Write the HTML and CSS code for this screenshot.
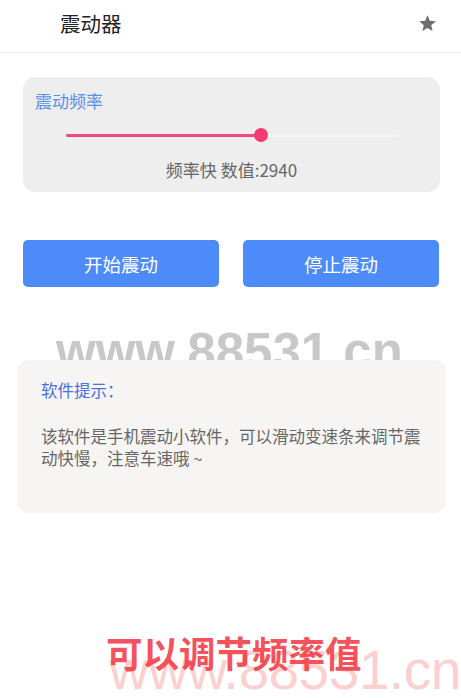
FILE: index.html
```html
<!DOCTYPE html>
<html lang="zh">
<head>
<meta charset="utf-8">
<title>震动器</title>
<link rel="stylesheet" href="styles.css">
</head>
<body>
<div class="page">
  <header class="topbar">
    <div class="title">震动器</div>
    <svg class="star" viewBox="0 0 24 24" width="19" height="19"><polygon points="12,1.5 14.9,8.6 22.5,9.2 16.7,14.1 18.5,21.6 12,17.6 5.5,21.6 7.3,14.1 1.5,9.2 9.1,8.6" fill="#6e6e6e"/></svg>
  </header>

  <section class="card freq">
    <div class="card-title">震动频率</div>
    <div class="slider">
      <div class="track">
        <div class="fill" style="width:59%"></div>
        <div class="thumb"></div>
      </div>
    </div>
    <div class="value">频率快 数值:2940</div>
  </section>

  <div class="buttons">
    <button class="btn">开始震动</button>
    <button class="btn">停止震动</button>
  </div>

  <div class="wm-gray">www.88531.cn</div>

  <section class="card tips">
    <div class="tips-title">软件提示：</div>
    <p class="tips-body">该软件是手机震动小软件，可以滑动变速条来调节震动快慢，注意车速哦 ~</p>
  </section>

  <div class="wm-pink">www.88531.cn</div>
  <div class="caption">可以调节频率值</div>
</div>
</body>
</html>
```

FILE: styles.css
```css
* { box-sizing: border-box; }
html, body { margin: 0; padding: 0; background: #ffffff; }
body {
  font-family: "Noto Sans CJK SC", "Noto Sans", sans-serif;
  width: 461px;
  height: 698px;
  overflow: hidden;
}
.page { position: relative; width: 461px; height: 698px; overflow: hidden; }

.topbar {
  height: 53px;
  border-bottom: 1px solid #ebebeb;
  display: flex;
  align-items: center;
  justify-content: space-between;
  padding: 0 24px 0 60px;
}
.title { font-size: 20.5px; color: #222; line-height: 1; margin-top: -5px; }
.star { margin-top: -5px; }

.card { border-radius: 12px; }

.freq {
  margin: 24px 21px 0 23px;
  height: 115px;
  background: #eeeeee;
  padding: 12px 12px 0 12px;
}
.card-title { font-size: 17px; line-height: 24px; color: #5a8fea; }
.slider { margin: 15px 31px 0 31px; height: 14px; display: flex; align-items: center; }
.track { position: relative; width: 100%; height: 3px; background: #f4f4f4; border-radius: 2px; }
.fill { height: 3px; background: #ee4a7c; border-radius: 2px; }
.thumb {
  position: absolute;
  left: 59%;
  top: 50%;
  width: 14px; height: 14px;
  margin: -7px 0 0 -7px;
  border-radius: 50%;
  background: #f23d74;
}
.value { margin-top: 16px; text-align: center; font-size: 17px; line-height: 24px; color: #666; }

.buttons {
  margin: 48px 22px 0 23px;
  display: flex;
  gap: 24px;
}
.btn {
  flex: 1;
  height: 47px;
  border: none;
  border-radius: 5px;
  background: #4d8bf8;
  color: #fff;
  font-family: "Noto Sans CJK SC", sans-serif;
  font-size: 18.5px;
  padding: 0;
}

.wm-gray {
  position: absolute;
  left: 56px;
  top: 326px;
  font-family: "Liberation Sans", Arial, sans-serif;
  font-weight: bold;
  font-size: 51px;
  line-height: 1;
  color: #c8c8c8;
  z-index: 0;
}

.tips {
  position: relative;
  z-index: 1;
  margin: 73px 15px 0 17px;
  height: 153px;
  background: #f6f5f4;
  padding: 18px 24px 0 24px;
}
.tips-title { font-size: 16.5px; line-height: 24px; color: #4a70e0; }
.tips-body { margin: 23px 0 0 0; font-size: 16.5px; line-height: 22px; color: #666; }

.wm-pink {
  position: absolute;
  left: 109px;
  top: 643px;
  font-family: "Liberation Sans", Arial, sans-serif;
  font-size: 55px;
  letter-spacing: -0.5px;
  line-height: 1;
  color: #fdd0d0;
  white-space: nowrap;
}
.caption {
  position: absolute;
  left: 106px;
  top: 631px;
  font-size: 36.5px;
  line-height: 1.2;
  font-weight: bold;
  color: rgba(242, 52, 62, 0.85);
  white-space: nowrap;
}
```
